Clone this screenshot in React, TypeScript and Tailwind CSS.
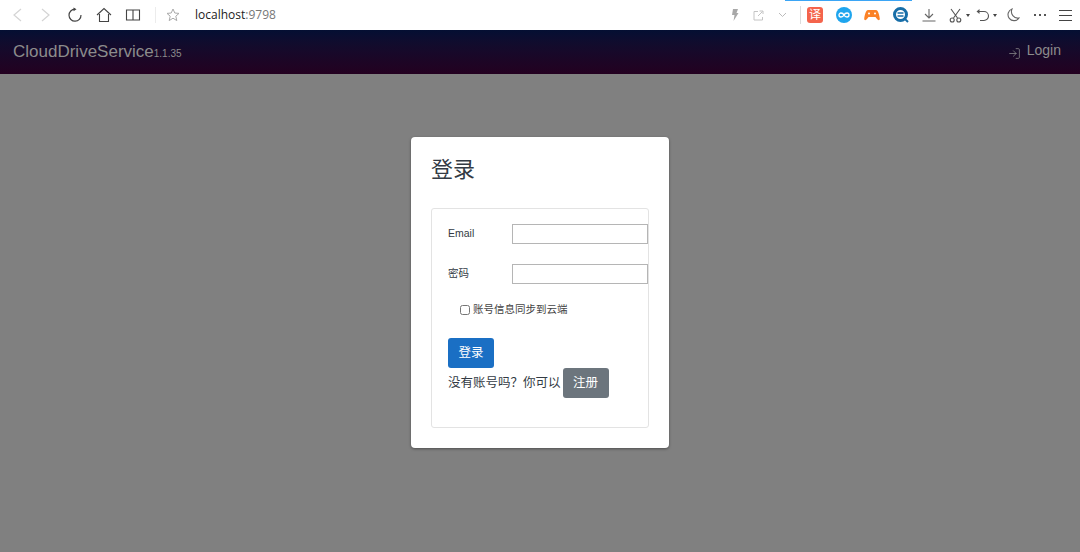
import { LogIn } from 'lucide-react';

const cjk = "font-['Liberation_Sans','Noto_Sans_CJK_SC',sans-serif]";

function Toolbar() {
  return (
    <div className="h-[30px] bg-white flex items-center relative shrink-0">
      {/* blue loading line along the top edge */}
      <div className="absolute top-0 left-[785px] w-[127px] h-px bg-[#3ba5f5]" />
      <div className="flex items-center pl-[10px]">
        <svg width="14" height="16" viewBox="0 0 14 16" fill="none" stroke="#d4d4d4" strokeWidth="1.2">
          <path d="M11 2 L4 8 L11 14" />
        </svg>
        <svg className="ml-[15px]" width="14" height="16" viewBox="0 0 14 16" fill="none" stroke="#d4d4d4" strokeWidth="1.2">
          <path d="M3 2 L10 8 L3 14" />
        </svg>
        <svg className="ml-[14px]" width="16" height="16" viewBox="0 0 16 16" fill="none" stroke="#444" strokeWidth="1.2">
          <path d="M8 2.2 A6 6 0 1 0 14 8" />
          <path d="M6.5 0.5 L9.5 2.2 L6.5 4.2" fill="#444" stroke="none" />
        </svg>
        <svg className="ml-[13px]" width="16" height="16" viewBox="0 0 16 16" fill="none" stroke="#444" strokeWidth="1.1">
          <path d="M1 8 L8 1.5 L15 8 M3.5 7 V14.5 H12.5 V7" />
        </svg>
        <svg className="ml-[13px]" width="16" height="16" viewBox="0 0 16 16" fill="none" stroke="#444" strokeWidth="1.1">
          <path d="M8 3 H1.5 V13 H8 H14.5 V3 H8 V13" />
        </svg>
        <div className="ml-[14px] w-px h-[16px] bg-[#ececec]" />
        <svg className="ml-[10px]" width="14" height="14" viewBox="0 0 14 14" fill="none" stroke="#aaa" strokeWidth="1">
          <path d="M7 1 L8.8 5 L13 5.4 L9.8 8.2 L10.8 12.6 L7 10.2 L3.2 12.6 L4.2 8.2 L1 5.4 L5.2 5 Z" />
        </svg>
        <span className="ml-[15px] text-[12px] font-['Open_Sans',sans-serif] text-[#222]">
          localhost<span className="text-[#777]">:9798</span>
        </span>
      </div>

      <div className="ml-auto flex items-center pr-[8px]">
        <svg width="8" height="12" viewBox="0 0 8 12" fill="#a8a8a8">
          <path d="M2 0 H7 L5.5 4 H7.5 L2.5 12 L3.5 6 H1 Z" />
        </svg>
        <svg className="ml-[14px]" width="11" height="11" viewBox="0 0 11 11" fill="none" stroke="#c4c4c4">
          <path d="M5 1.5 H1 V10 H9.5 V7 M5 6 L9.5 1.5 M6.5 1 H10 V4" />
        </svg>
        <svg className="ml-[14px]" width="9" height="6" viewBox="0 0 9 6" fill="none" stroke="#bbb">
          <path d="M1 1 L4.5 4.5 L8 1" />
        </svg>
        <div className="ml-[13px] w-px h-[18px] bg-[#dcdcdc]" />
        <div className={`ml-[6px] w-[16px] h-[16px] rounded-[3px] bg-[#f4644c] text-white text-[12px] leading-[16px] text-center ${cjk}`}>译</div>
        <div className="ml-[13px] w-[16px] h-[16px] rounded-full bg-[#1ea5ee] flex items-center justify-center">
          <svg width="12" height="6" viewBox="0 0 12 6" fill="none" stroke="white" strokeWidth="1.3">
            <path d="M6 3 C5 1 4 1 3 1 A2 2 0 0 0 3 5 C4 5 5 5 6 3 C7 1 8 1 9 1 A2 2 0 0 1 9 5 C8 5 7 5 6 3 Z" />
          </svg>
        </div>
        <svg className="ml-[12px]" width="16" height="12" viewBox="0 0 16 12">
          <path d="M4 1 H12 C14 1 15.5 6 15.8 10 C15.8 11.5 14 11.5 13 10 L11.5 8 H4.5 L3 10 C2 11.5 0.2 11.5 0.2 10 C0.5 6 2 1 4 1 Z" fill="#fb8226" />
          <circle cx="5" cy="4.5" r="1" fill="white" />
          <circle cx="11" cy="4.5" r="1" fill="white" />
        </svg>
        <svg className="ml-[13px]" width="16" height="16" viewBox="0 0 16 16">
          <circle cx="7.5" cy="7.5" r="6" fill="none" stroke="#176ea8" strokeWidth="3" />
          <path d="M4.5 6 H10.5 M4.5 9 H10.5" stroke="#176ea8" strokeWidth="1.4" />
          <path d="M11 11 L15 15" stroke="#176ea8" strokeWidth="2" />
        </svg>
        <svg className="ml-[13px]" width="14" height="14" viewBox="0 0 14 14" fill="none" stroke="#666" strokeWidth="1.1">
          <path d="M7 1 V10 M3 6 L7 10 L11 6 M0.5 13 H13.5" />
        </svg>
        <svg className="ml-[13px]" width="13" height="15" viewBox="0 0 13 15" fill="none" stroke="#555" strokeWidth="1.1">
          <path d="M2 1 L8.5 10 M11 1 L4.5 10" />
          <circle cx="3.2" cy="12" r="2" />
          <circle cx="9.8" cy="12" r="2" />
        </svg>
        <div className="ml-[4px] w-0 h-0 border-x-[2.5px] border-x-transparent border-t-[3px] border-t-[#444]" />
        <svg className="ml-[6px]" width="14" height="14" viewBox="0 0 14 14" fill="none" stroke="#555" strokeWidth="1.1">
          <path d="M1 3.5 H8 A4.5 4.5 0 0 1 8 12.5 H4" />
          <path d="M3.5 1 L0.5 3.5 L3.5 6" fill="#555" stroke="none" />
        </svg>
        <div className="ml-[3px] w-0 h-0 border-x-[2.5px] border-x-transparent border-t-[3px] border-t-[#444]" />
        <svg className="ml-[10px]" width="13" height="14" viewBox="0 0 13 14" fill="none" stroke="#666" strokeWidth="1.1">
          <path d="M5 1 A6 6 0 1 0 12 10 A6.5 6.5 0 0 1 5 1 Z" />
        </svg>
        <div className="ml-[14px] flex gap-[3px]">
          <span className="w-[2px] h-[2px] bg-[#555]" />
          <span className="w-[2px] h-[2px] bg-[#555]" />
          <span className="w-[2px] h-[2px] bg-[#555]" />
        </div>
        <div className="ml-[13px] flex flex-col gap-[4px] w-[13px]">
          <span className="h-px bg-[#444]" />
          <span className="h-px bg-[#444]" />
          <span className="h-px bg-[#444]" />
        </div>
      </div>
    </div>
  );
}

function Navbar() {
  return (
    <div className="h-[44px] shrink-0 bg-gradient-to-b from-[#040f33] to-[#230020] flex items-center justify-between pl-[13px] pr-[19px]">
      <div className="flex items-baseline font-['Liberation_Sans',sans-serif] text-[#8c8c8c]">
        <span className="text-[17px]">CloudDriveService</span>
        <span className="text-[10px]">1.1.35</span>
      </div>
      <div className="flex items-center gap-[6px] text-[#8c8c8c] font-['Liberation_Sans',sans-serif] text-[14px]">
        <LogIn size={13} strokeWidth={1.4} className="mt-[2px]" />
        <span className="mt-[-3px]">Login</span>
      </div>
    </div>
  );
}

function LoginCard() {
  return (
    <div className={`w-[258px] h-[311px] bg-white rounded-[4px] shadow-[0_1px_3px_rgba(0,0,0,0.4)] px-[20px] pt-[17px] ${cjk} text-[#333b44]`}>
      <h2 className="text-[22px] leading-[32px]">登录</h2>
      <div className="mt-[22px] w-[218px] h-[220px] border border-[#e3e3e3] rounded-[3px] pl-[16px] pt-[15px]">
        <div className="flex items-center h-[20px]">
          <label className="w-[70px] text-[10.5px]">Email</label>
          <input className="w-[136px] h-[20px] shrink-0 border border-[#b5b5b5] bg-white" />
        </div>
        <div className="flex items-center h-[20px] mt-[20px]">
          <label className="w-[70px] text-[10.5px]">密码</label>
          <input className="w-[136px] h-[20px] shrink-0 border border-[#b5b5b5] bg-white" />
        </div>
        <label className="flex items-center mt-[19px] ml-[12px] text-[10.5px] h-[14px] text-[#444]">
          <input type="checkbox" className="w-[10px] h-[10px] mr-[3px]" />
          账号信息同步到云端
        </label>
        <button className="block mt-[21px] w-[46px] h-[30px] rounded-[3px] bg-[#1a6fc4] text-white text-[12.5px]">登录</button>
        <div className="flex items-center text-[12.5px]">
          <span>没有账号吗？你可以</span>
          <button className="ml-[2px] w-[46px] h-[30px] rounded-[3px] bg-[#6c757d] text-white text-[12.5px]">注册</button>
        </div>
      </div>
    </div>
  );
}

export default function App() {
  return (
    <div className="w-[1080px] h-[552px] flex flex-col overflow-hidden bg-[#808080]">
      <Toolbar />
      <Navbar />
      <main className="flex-1 flex justify-center pt-[63px]">
        <LoginCard />
      </main>
    </div>
  );
}
